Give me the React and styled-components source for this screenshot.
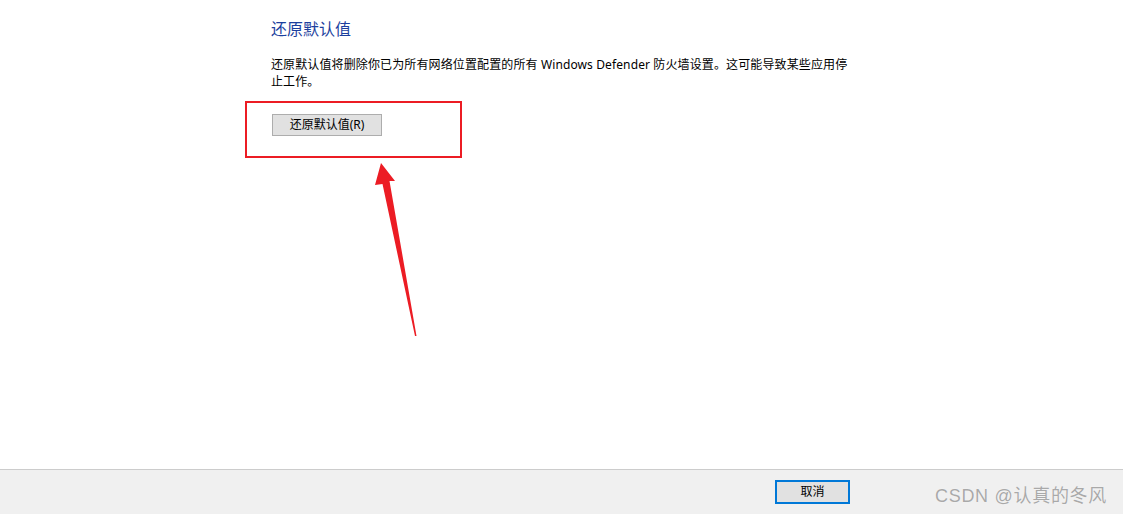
import React from 'react';
import styled, { createGlobalStyle } from 'styled-components';

const GlobalStyle = createGlobalStyle`
  html, body {
    margin: 0;
    padding: 0;
    background: #fff;
  }
  body {
    font-family: 'Noto Sans', 'Noto Sans CJK SC', sans-serif;
    color: #000;
  }
`;

const Page = styled.div`
  position: relative;
  width: 1123px;
  height: 514px;
  display: flex;
  flex-direction: column;
  overflow: hidden;
`;

const Content = styled.main`
  flex: 1;
  padding: 18px 0 0 271px;
`;

const Heading = styled.h1`
  margin: 0;
  font-size: 16px;
  font-weight: 400;
  line-height: 22px;
  color: #1c3f9e;
`;

const Description = styled.p`
  margin: 16px 0 0;
  font-size: 12px;
  line-height: 17px;
  letter-spacing: 0.12px;
  color: #000;
`;

const Highlight = styled.div`
  margin: 11px 0 0 -26px;
  width: 217px;
  height: 57px;
  box-sizing: border-box;
  border: 2px solid #ec1c24;
  padding: 9px 0 0 25px;
`;

const Button = styled.button`
  box-sizing: border-box;
  width: ${(p) => p.width}px;
  height: ${(p) => (p.primary ? 24 : 22)}px;
  padding: 0;
  background: #e1e1e1;
  border: ${(p) => (p.primary ? '2px solid #0078d7' : '1px solid #adadad')};
  border-radius: 0;
  font-family: 'Noto Sans', 'Noto Sans CJK SC', sans-serif;
  font-size: 12px;
  line-height: 1;
  color: #000;
`;

const Footer = styled.footer`
  height: 44px;
  border-top: 1px solid #cccccc;
  background: #f0f0f0;
  display: flex;
  align-items: center;
  padding: 0 16px 0 775px;
  margin-top: auto;
`;

const Watermark = styled.span`
  margin-left: auto;
  margin-top: 4px;
  font-family: 'Liberation Sans', 'Noto Sans CJK SC', sans-serif;
  font-size: 18px;
  letter-spacing: 0.7px;
  color: #a9a9a9;
  text-shadow: 0 0 1px #fff;
  white-space: nowrap;
`;

const Arrow = styled.svg`
  position: absolute;
  left: 0;
  top: 0;
  pointer-events: none;
`;

export default function App() {
  return (
    <>
      <GlobalStyle />
      <Page>
        <Content>
          <Heading>还原默认值</Heading>
          <Description>
            还原默认值将删除你已为所有网络位置配置的所有 Windows Defender 防火墙设置。这可能导致某些应用停
            <br />
            止工作。
          </Description>
          <Highlight>
            <Button width={110}>还原默认值(R)</Button>
          </Highlight>
        </Content>
        <Footer>
          <Button primary width={75}>取消</Button>
          <Watermark>CSDN @认真的冬风</Watermark>
        </Footer>
        <Arrow width="1123" height="514" viewBox="0 0 1123 514">
          <polygon
            points="381,163 395,181 389.5,181 416.5,336 415,336 382.5,184 375,185"
            fill="#ec1c24"
          />
        </Arrow>
      </Page>
    </>
  );
}
